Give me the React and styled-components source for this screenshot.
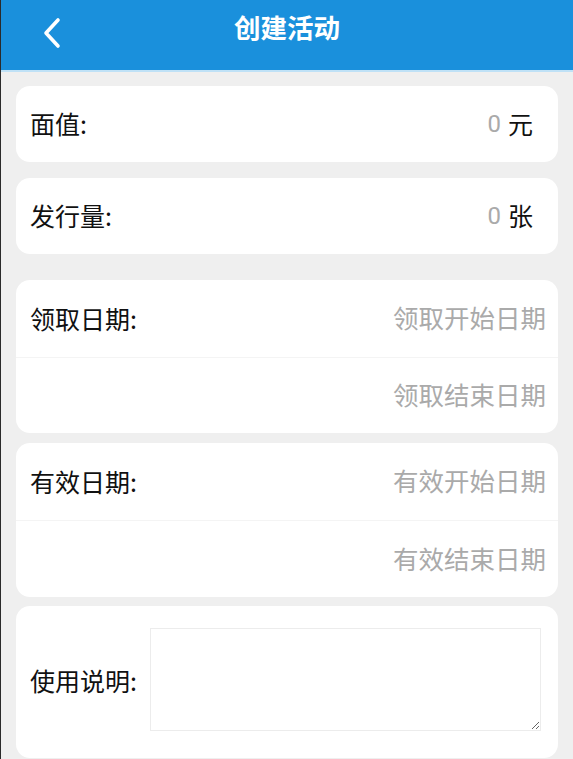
import React from "react";
import styled, { createGlobalStyle } from "styled-components";

const GlobalStyle = createGlobalStyle`
  html, body {
    margin: 0;
    padding: 0;
    background: #efefef;
  }
  body {
    font-family: "Noto Sans CJK SC", "Noto Sans", sans-serif;
  }
  * {
    box-sizing: border-box;
  }
`;

const Page = styled.div`
  min-height: 759px;
  background: #efefef;
  border-left: 1px solid #2a2a2a;
`;

const Header = styled.div`
  height: 72px;
  background: #1a90dc;
  border-bottom: 2px solid #bfe1f6;
  display: flex;
  align-items: center;
  justify-content: center;
  position: relative;
`;

const Back = styled.div`
  position: absolute;
  left: 38px;
  top: 16px;
  width: 26px;
  height: 34px;
  display: flex;
  align-items: center;
  justify-content: center;
`;

const Title = styled.h1`
  margin: 0 0 16px 0;
  color: #fff;
  font-size: 26.5px;
  font-weight: 700;
  line-height: 1.2;
`;

const Body = styled.div`
  padding: 14px 15px 0 15px;
  display: flex;
  flex-direction: column;
`;

const Card = styled.div`
  background: #fff;
  border-radius: 14px;
  margin-top: ${(p) => p.gap || 0}px;
  overflow: hidden;
`;

const Row = styled.div`
  height: ${(p) => p.h || 76}px;
  display: flex;
  align-items: center;
  justify-content: space-between;
  padding: 0 ${(p) => p.pr || 25}px 2px 14px;
  border-top: ${(p) => (p.divided ? "1px solid #f4f4f4" : "none")};
`;

const Label = styled.span`
  font-size: 25px;
  line-height: 1.2;
  color: #111;
`;

const Value = styled.span`
  font-size: 25px;
  line-height: 1.2;
  color: #111;
  display: flex;
  align-items: center;
  gap: 7px;
`;

const Zero = styled.span`
  color: #aaa;
  font-family: "Roboto", "Noto Sans", sans-serif;
  font-size: 24px;
  padding-top: 3px;
`;

const Placeholder = styled.span`
  font-size: 25.5px;
  line-height: 1.2;
  color: #aaa;
`;

const NoteRow = styled.div`
  display: flex;
  align-items: center;
  padding: 22px 17px 27px 14px;
`;

const NoteLabel = styled(Label)`
  width: 120px;
  flex-shrink: 0;
`;

const TextArea = styled.textarea`
  flex: 1;
  height: 103px;
  border: 1px solid #ececec;
  background: #fff;
  resize: vertical;
  outline: none;
  font-family: inherit;
  font-size: 18px;
  margin: 0;
`;

export default function App() {
  return (
    <>
      <GlobalStyle />
      <Page>
        <Header>
          <Back>
            <svg width="22" height="32" viewBox="0 0 22 32">
              <path
                d="M17 3 L5 16 L17 29"
                fill="none"
                stroke="#fff"
                strokeWidth="3.6"
                strokeLinecap="round"
                strokeLinejoin="round"
              />
            </svg>
          </Back>
          <Title>创建活动</Title>
        </Header>
        <Body>
          <Card>
            <Row>
              <Label>面值:</Label>
              <Value>
                <Zero>0</Zero>元
              </Value>
            </Row>
          </Card>
          <Card gap={16}>
            <Row>
              <Label>发行量:</Label>
              <Value>
                <Zero>0</Zero>张
              </Value>
            </Row>
          </Card>
          <Card gap={26}>
            <Row h={77} pr={12}>
              <Label>领取日期:</Label>
              <Placeholder>领取开始日期</Placeholder>
            </Row>
            <Row h={76} pr={12} divided>
              <span />
              <Placeholder>领取结束日期</Placeholder>
            </Row>
          </Card>
          <Card gap={10}>
            <Row h={77} pr={12}>
              <Label>有效日期:</Label>
              <Placeholder>有效开始日期</Placeholder>
            </Row>
            <Row h={77} pr={12} divided>
              <span />
              <Placeholder>有效结束日期</Placeholder>
            </Row>
          </Card>
          <Card gap={9}>
            <NoteRow>
              <NoteLabel>使用说明:</NoteLabel>
              <TextArea />
            </NoteRow>
          </Card>
        </Body>
      </Page>
    </>
  );
}
